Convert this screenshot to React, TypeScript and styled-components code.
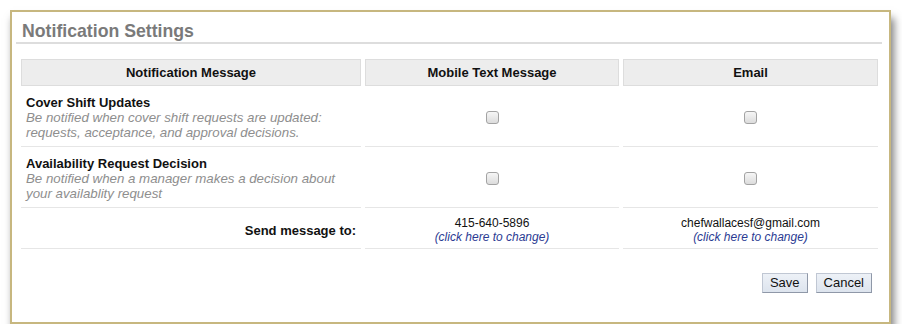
import React from "react";
import styled, { createGlobalStyle } from "styled-components";

const GlobalStyle = createGlobalStyle`
  html, body {
    margin: 0;
    padding: 0;
    background: #fff;
    font-family: "Liberation Sans", Arial, sans-serif;
  }
`;

const Page = styled.div`
  padding: 10px 11px 0 10px;
`;

const Panel = styled.div`
  box-sizing: border-box;
  width: 881px;
  border: 2px solid #c7b77f;
  background: #fff;
  padding: 0 7px 29px 4px;
  box-shadow: 3px 8px 8px rgba(0, 0, 0, 0.5);
`;

const Title = styled.h2`
  margin: 0;
  padding: 9px 0 1px 6px;
  font-size: 17.7px;
  line-height: 20px;
  font-weight: bold;
  color: #7a7a7a;
  border-bottom: 2px solid #dddddd;
`;

const Grid = styled.div`
  display: grid;
  grid-template-columns: 340px 254px 255px;
  column-gap: 4px;
  row-gap: 4px;
  margin: 15px 4px 0 5px;
`;

const HeadCell = styled.div`
  background: #ededed;
  border: 1px solid #dddddd;
  line-height: 25px;
  font-size: 13px;
  font-weight: bold;
  color: #111;
  text-align: center;
`;

const Cell = styled.div<{ $align?: "left" | "center" | "right"; $tight?: boolean }>`
  display: flex;
  flex-direction: column;
  justify-content: center;
  align-items: ${(p) =>
    p.$align === "right" ? "flex-end" : p.$align === "center" ? "center" : "flex-start"};
  text-align: ${(p) => p.$align || "left"};
  border-bottom: 1px solid #e6e6e6;
  padding: ${(p) => (p.$tight ? "4px 5px 4px 5px" : "5px 5px 6px 5px")};
`;

const ItemTitle = styled.div`
  font-size: 13px;
  line-height: 15px;
  font-weight: bold;
  color: #111;
`;

const ItemDesc = styled.div`
  font-size: 13.3px;
  line-height: 15px;
  font-style: italic;
  color: #8e8e8e;
`;

const Check = styled.input.attrs({ type: "checkbox" })`
  appearance: none;
  -webkit-appearance: none;
  box-sizing: border-box;
  width: 13px;
  height: 13px;
  margin: 0;
  border: 1px solid #a3a3a3;
  border-radius: 3px;
  background: linear-gradient(#f6f6f6, #dcdcdc);
  cursor: pointer;
  &:checked {
    background: linear-gradient(#e8eef8, #c8d4e8);
  }
`;

const Contact = styled.div`
  font-size: 12px;
  line-height: 14px;
  color: #111;
`;

const ChangeLink = styled.a`
  font-size: 12px;
  line-height: 14px;
  font-style: italic;
  color: #2b3b93;
  text-decoration: none;
  cursor: pointer;
`;

const Label = styled.div`
  font-size: 13px;
  font-weight: bold;
  color: #111;
`;

const Actions = styled.div`
  display: flex;
  justify-content: flex-end;
  gap: 8px;
  margin: 24px 10px 0 0;
`;

const Button = styled.button`
  height: 20px;
  padding: 0 7px;
  font-family: "Liberation Sans", Arial, sans-serif;
  font-size: 13px;
  line-height: 18px;
  color: #111;
  background: linear-gradient(#edf1f7, #dde4ee);
  border: 1px solid #c0c7d3;
  border-right-color: #8f98a8;
  border-bottom-color: #8f98a8;
  border-radius: 0;
  cursor: pointer;
`;

const settings = [
  {
    title: "Cover Shift Updates",
    desc: [
      "Be notified when cover shift requests are updated:",
      "requests, acceptance, and approval decisions.",
    ],
  },
  {
    title: "Availability Request Decision",
    desc: [
      "Be notified when a manager makes a decision about",
      "your availablity request",
    ],
  },
];

export default function App() {
  return (
    <>
      <GlobalStyle />
      <Page>
        <Panel>
          <Title>Notification Settings</Title>
          <Grid>
            <HeadCell>Notification Message</HeadCell>
            <HeadCell>Mobile Text Message</HeadCell>
            <HeadCell>Email</HeadCell>
            {settings.map((s) => (
              <React.Fragment key={s.title}>
                <Cell>
                  <ItemTitle>{s.title}</ItemTitle>
                  {s.desc.map((d) => (
                    <ItemDesc key={d}>{d}</ItemDesc>
                  ))}
                </Cell>
                <Cell $align="center">
                  <Check />
                </Cell>
                <Cell $align="center">
                  <Check />
                </Cell>
              </React.Fragment>
            ))}
            <Cell $align="right" $tight>
              <Label>Send message to:</Label>
            </Cell>
            <Cell $align="center" $tight>
              <Contact>415-640-5896</Contact>
              <ChangeLink>(click here to change)</ChangeLink>
            </Cell>
            <Cell $align="center" $tight>
              <Contact>chefwallacesf@gmail.com</Contact>
              <ChangeLink>(click here to change)</ChangeLink>
            </Cell>
          </Grid>
          <Actions>
            <Button>Save</Button>
            <Button>Cancel</Button>
          </Actions>
        </Panel>
      </Page>
    </>
  );
}
